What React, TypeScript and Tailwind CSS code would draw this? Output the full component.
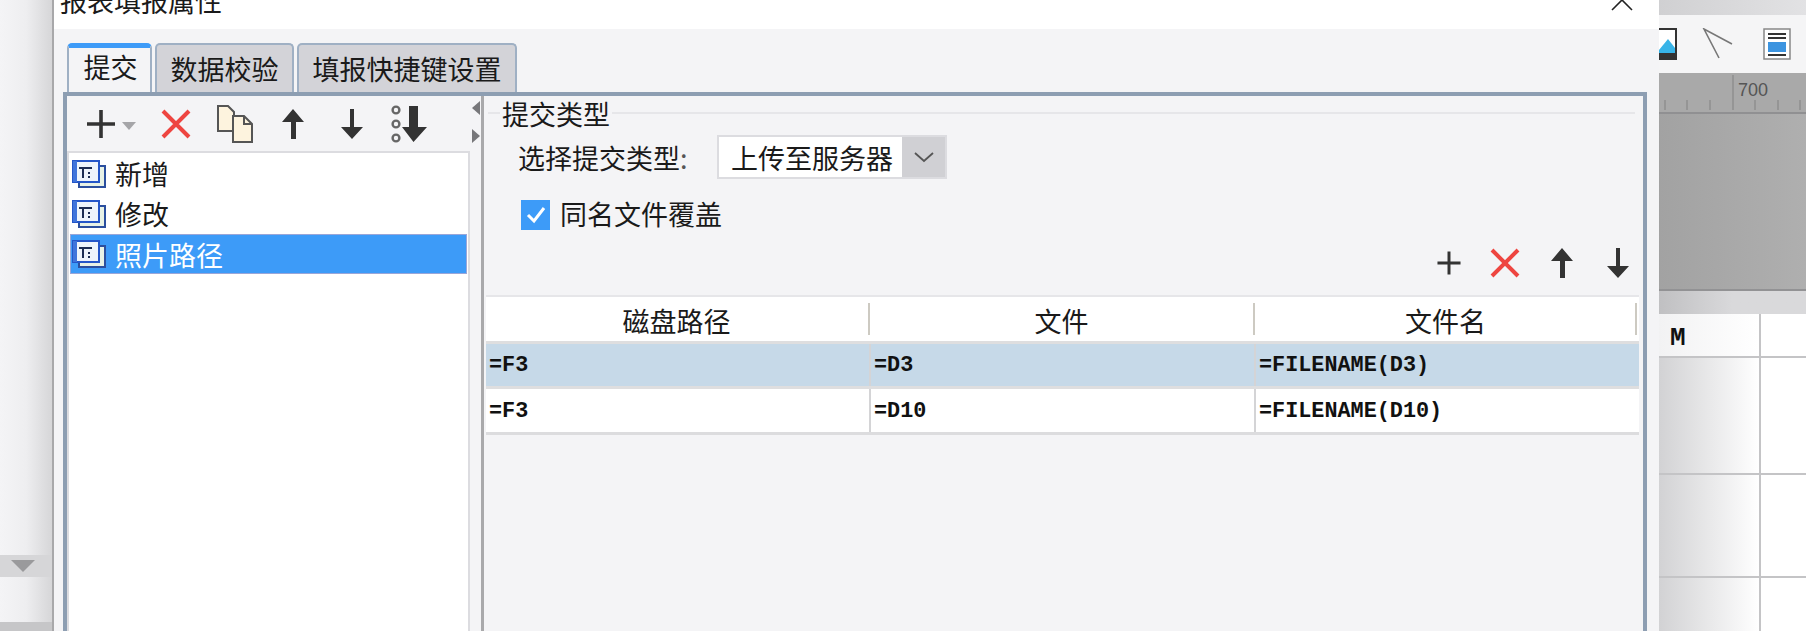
const FONT = "font-['Noto_Sans_CJK_SC','Liberation_Sans',sans-serif]";

function Plus({ size = 34 }: { size?: number }) {
  return (
    <svg width={size} height={size} viewBox="0 0 34 34" className="block">
      <path d="M3 17H31M17 3V31" stroke="#333" strokeWidth="3.6" fill="none" />
    </svg>
  );
}
function Cross() {
  return (
    <svg width="32" height="32" viewBox="0 0 32 32" className="block">
      <path d="M3 3L29 29M29 3L3 29" stroke="#ee4540" strokeWidth="4" fill="none" />
    </svg>
  );
}
function ArrowUp() {
  return (
    <svg width="24" height="32" viewBox="0 0 24 32" className="block">
      <path d="M12 1L23 14H15V31H10V14H1Z" fill="#333" />
    </svg>
  );
}
function ArrowDown() {
  return (
    <svg width="24" height="32" viewBox="0 0 24 32" className="block">
      <path d="M12 31L1 19H10V1H14V19H23Z" fill="#333" />
    </svg>
  );
}
function MoveAll() {
  return (
    <svg width="38" height="38" viewBox="0 0 38 38" className="block">
      <circle cx="5" cy="5" r="3.4" fill="none" stroke="#666" strokeWidth="2.4" />
      <circle cx="5" cy="19" r="3.4" fill="none" stroke="#666" strokeWidth="2.4" />
      <circle cx="5" cy="33" r="3.4" fill="none" stroke="#666" strokeWidth="2.4" />
      <path d="M18 1H27V22H36L22.5 37L11 22H18Z" fill="#333" />
    </svg>
  );
}
function Copy() {
  return (
    <svg width="38" height="38" viewBox="0 0 38 38" className="block">
      <path d="M2 1H12L18 7V26H2Z" fill="#fdf3de" stroke="#555" strokeWidth="2" />
      <path d="M17 11H28L36 19V37H17Z" fill="#fdf3de" stroke="#555" strokeWidth="2" />
      <path d="M28 11V19H36" fill="none" stroke="#555" strokeWidth="2" />
    </svg>
  );
}
function ReportIcon() {
  return (
    <svg width="34" height="28" viewBox="0 0 34 28" className="block shrink-0">
      <rect x="7" y="6" width="26" height="21" fill="#e8f2e6" stroke="#2b4f9e" strokeWidth="2" />
      <rect x="1" y="1" width="26" height="21" fill="#eef4fb" stroke="#2456c8" strokeWidth="2" />
      <rect x="1" y="1" width="4" height="21" fill="#3f74db" />
      <path d="M7 8H20M11 8V18M16 13H18M16 17H18" stroke="#1c2c52" strokeWidth="2" fill="none" />
    </svg>
  );
}
function ListRow({ label, selected }: { label: string; selected?: boolean }) {
  return (
    <div
      className={
        "flex h-[40px] items-center gap-[9px] pl-[2px] text-[27px] leading-none " +
        (selected ? "bg-[#3d9bf8] text-white outline outline-1 -outline-offset-1 outline-[#9aa6d8]" : "text-[#1a1a1a]")
      }
    >
      <ReportIcon />
      <span className={selected ? "" : "mb-[2px]"}>{label}</span>
    </div>
  );
}
function HeaderCell({ label, last }: { label: string; last?: boolean }) {
  return (
    <div className="relative flex h-full items-center justify-center pr-[4px] pt-[2px] text-[27px] leading-none text-[#1a1a1a]">
      {label}
      <span className={"absolute top-[6px] h-[32px] w-[2px] bg-[#cdcac2] " + (last ? "right-[2px]" : "right-[1px]")} />
    </div>
  );
}
function Cell({ text, last }: { text: string; last?: boolean }) {
  return (
    <div
      className={
        "flex h-full items-center pl-[3px] pt-[2px] font-['Liberation_Mono',monospace] text-[21.8px] font-bold leading-none text-[#111] " +
        (last ? "" : "border-r-2 border-[#d4d4d6]")
      }
    >
      {text}
    </div>
  );
}
const TABS_INACTIVE =
  "flex h-[49px] items-center justify-center rounded-t-[5px] border-2 border-b-0 border-[#9fb0c4] bg-[#d3d3d8] text-[27px] leading-none text-[#1a1a1a]";

export default function App() {
  return (
    <div className={"flex h-[631px] w-[1806px] overflow-hidden bg-white " + FONT}>
      {/* left backdrop */}
      <div className="flex h-full w-[52px] shrink-0 flex-col bg-gradient-to-r from-[#f4f4f6] via-[#eeeef0] to-[#d6d6d8]">
        <div className="h-[555px]" />
        <div className="flex h-[22px] items-center justify-center bg-[#d6d6d8] pr-[6px]">
          <svg width="24" height="12" viewBox="0 0 24 12">
            <path d="M0 0H24L12 12Z" fill="#9a9a9c" />
          </svg>
        </div>
        <div className="h-[45px]" />
        <div className="flex-1 bg-[#c6c6c8]" />
      </div>

      {/* dialog */}
      <div className="flex h-full w-[1607px] shrink-0 flex-col border-l-[2px] border-[#a8a8aa] bg-[#f4f4f6]">
        <div className="-mt-[29px] flex h-[58px] shrink-0 items-center justify-between bg-white pl-[6px] pr-[26px]">
          <span className="text-[27px] leading-none text-[#1a1a1a]">报表填报属性</span>
          <svg width="22" height="22" viewBox="0 0 22 22">
            <path d="M1 1L21 21M21 1L1 21" stroke="#222" strokeWidth="1.6" fill="none" />
          </svg>
        </div>

        <div className="flex min-h-0 flex-1 flex-col pl-[9px] pr-[12px] pt-[14px]">
          {/* tabs */}
          <div className="flex h-[49px] shrink-0 gap-[3px] pl-[4px]">
            <div className="flex h-[49px] w-[85px] items-start justify-center rounded-t-[5px] border-x-2 border-t-[5px] border-[#9fb0c4] border-t-[#3d9bf8] bg-[#f4f4f6] pl-[2px] pt-[1px] text-[27px] leading-[36px] text-[#1a1a1a]">
              提交
            </div>
            <div className={TABS_INACTIVE + " w-[139px]"}>数据校验</div>
            <div className={TABS_INACTIVE + " w-[220px]"}>填报快捷键设置</div>
          </div>

          {/* tab panel */}
          <div className="flex min-h-0 flex-1 border-x-[4px] border-t-[4px] border-[#8d9eb2]">
            {/* left pane */}
            <div className="flex w-[403px] shrink-0 flex-col">
              <div className="flex h-[55px] shrink-0 items-center pl-[17px]">
                <Plus />
                <svg width="14" height="8" viewBox="0 0 14 8" className="ml-[4px] mr-[24px] mt-[4px]">
                  <path d="M0 0H14L7 8Z" fill="#a5a5a8" />
                </svg>
                <Cross />
                <div className="ml-[24px]">
                  <Copy />
                </div>
                <div className="ml-[27px]">
                  <ArrowUp />
                </div>
                <div className="ml-[35px]">
                  <ArrowDown />
                </div>
                <div className="ml-[27px]">
                  <MoveAll />
                </div>
              </div>
              <div className="min-h-0 flex-1 border-2 border-b-0 border-[#dcdce0] bg-white pl-[1px] pr-[1px] pt-[1px]">
                <ListRow label="新增" />
                <ListRow label="修改" />
                <ListRow label="照片路径" selected />
              </div>
            </div>

            {/* splitter */}
            <div className="flex w-[14px] shrink-0 flex-col items-center gap-[14px] border-r-[3px] border-[#a9a9ab] pt-[5px]">
              <svg width="8" height="14" viewBox="0 0 8 14">
                <path d="M8 0V14L0 7Z" fill="#77777a" />
              </svg>
              <svg width="8" height="14" viewBox="0 0 8 14">
                <path d="M0 0V14L8 7Z" fill="#77777a" />
              </svg>
            </div>

            {/* right pane */}
            <div className="flex min-w-0 flex-1 flex-col pl-[2px]">
              <div className="flex h-[34px] shrink-0 items-center pl-[2px] pr-[8px]">
                <div className="h-[2px] w-[12px] bg-[#e6e6e9]" />
                <span className="px-[2px] text-[27px] leading-none text-[#1a1a1a]">提交类型</span>
                <div className="h-[2px] flex-1 bg-[#e6e6e9]" />
              </div>
              <div className="mt-[5px] flex h-[44px] shrink-0 items-center pl-[32px]">
                <span className="w-[199px] text-[27px] leading-none text-[#1a1a1a]">
                  选择提交类型<span className="text-[#555]">:</span>
                </span>
                <div className="flex h-[44px] w-[230px] border-2 border-[#dcdce0]">
                  <div className="flex flex-1 items-center bg-white pl-[12px] text-[27px] leading-none text-[#1a1a1a]">
                    上传至服务器
                  </div>
                  <div className="flex w-[43px] items-center justify-center bg-[#d0d0d4]">
                    <svg width="20" height="11" viewBox="0 0 20 11">
                      <path d="M1 1L10 9L19 1" stroke="#555" strokeWidth="1.8" fill="none" />
                    </svg>
                  </div>
                </div>
              </div>
              <div className="mt-[21px] flex h-[30px] shrink-0 items-center gap-[10px] pl-[35px]">
                <div className="flex h-[30px] w-[29px] items-center justify-center bg-[#3d9bf8]">
                  <svg width="20" height="18" viewBox="0 0 20 18">
                    <path d="M2 9L8 15L18 2" stroke="#fff" strokeWidth="3" fill="none" />
                  </svg>
                </div>
                <span className="mb-[4px] text-[27px] leading-none text-[#1a1a1a]">同名文件覆盖</span>
              </div>
              <div className="flex h-[65px] shrink-0 items-end justify-end pb-[16px] pr-[13px]">
                <div className="flex items-center">
                  <Plus size={28} />
                  <div className="ml-[26px]">
                    <Cross />
                  </div>
                  <div className="ml-[29px]">
                    <ArrowUp />
                  </div>
                  <div className="ml-[32px]">
                    <ArrowDown />
                  </div>
                </div>
              </div>
              <div className="w-[1153px] border-t-2 border-[#e6e6e9]">
                <div className="grid h-[44px] grid-cols-[385px_385px_383px] bg-white">
                  <HeaderCell label="磁盘路径" />
                  <HeaderCell label="文件" />
                  <HeaderCell label="文件名" last />
                </div>
                <div className="grid h-[48px] grid-cols-[385px_385px_383px] border-y-[3px] border-y-[#dededf] bg-[#c6d9e8]">
                  <Cell text="=F3" />
                  <Cell text="=D3" />
                  <Cell text="=FILENAME(D3)" last />
                </div>
                <div className="grid h-[46px] grid-cols-[385px_385px_383px] border-b-[3px] border-[#dcdcde] bg-white">
                  <Cell text="=F3" />
                  <Cell text="=D10" />
                  <Cell text="=FILENAME(D10)" last />
                </div>
              </div>
            </div>
          </div>
        </div>
      </div>

      {/* designer behind */}
      <div className="flex h-full min-w-0 flex-1 flex-col">
        <div className="h-[15px] shrink-0 bg-gradient-to-r from-[#d0d0d2] to-[#e2e2e4]" />
        <div className="flex h-[58px] shrink-0 items-center bg-[#f5f5f6]">
          <svg width="18" height="32" viewBox="0 0 18 32" className="block">
            <rect x="-10" y="1" width="27" height="30" fill="#fff" stroke="#333" strokeWidth="2" />
            <path d="M0 22L9 11L16 20V25H0Z" fill="#38b4e8" />
            <rect x="0" y="25" width="18" height="7" fill="#333" />
          </svg>
          <svg width="32" height="32" viewBox="0 0 32 32" className="ml-[25px] block">
            <path d="M30 16L2 1L17 30" stroke="#777" strokeWidth="1.6" fill="none" />
          </svg>
          <svg width="28" height="32" viewBox="0 0 28 32" className="ml-[29px] block">
            <rect x="1" y="1" width="26" height="30" fill="#fff" stroke="#888" strokeWidth="1.5" />
            <path d="M5 6H23M5 10H23M5 27H23" stroke="#333" strokeWidth="2" />
            <rect x="5" y="14" width="18" height="10" fill="#3c94e0" />
          </svg>
        </div>
        <div className="relative h-[41px] shrink-0 border-b-2 border-[#909092] bg-[#a9a9a9]">
          <svg width="147" height="39" viewBox="0 0 147 39" className="block">
            <path
              d="M6 27V37M28 27V37M51 27V37M74 2V37M96 27V37M119 27V37M141 27V37"
              stroke="#8e8e8e"
              strokeWidth="1.5"
            />
          </svg>
          <span className="absolute left-[79px] top-[6px] font-['Liberation_Sans',sans-serif] text-[18px] leading-[22px] text-[#555]">
            700
          </span>
        </div>
        <div className="h-[177px] shrink-0 border-b-2 border-[#929294] bg-gradient-to-r from-[#a2a2a2] to-[#afafaf]" />
        <div className="h-[23px] shrink-0 bg-gradient-to-r from-[#c0c0c2] via-[#d9d9db] to-[#d9d9db]" />
        <div className="grid min-h-0 flex-1 grid-cols-[102px_1fr] grid-rows-[44px_117px_103px_1fr] bg-white">
          <div className="flex items-center border-b-2 border-r-2 border-[#c4c4c6] bg-gradient-to-r from-[#f2f2f3] to-white pl-[11px] pt-[6px] font-['Liberation_Mono',monospace] text-[26px] font-bold leading-none text-[#111]">
            M
          </div>
          <div className="border-b-2 border-[#c4c4c6]" />
          <div className="border-b-2 border-r-2 border-[#c4c4c6] bg-gradient-to-r from-[#d2d2d4] to-white" />
          <div className="border-b-2 border-[#c4c4c6]" />
          <div className="border-b-2 border-r-2 border-[#c4c4c6] bg-gradient-to-r from-[#d2d2d4] to-white" />
          <div className="border-b-2 border-[#c4c4c6]" />
          <div className="border-r-2 border-[#c4c4c6] bg-gradient-to-r from-[#d2d2d4] to-white" />
          <div />
        </div>
      </div>
    </div>
  );
}
